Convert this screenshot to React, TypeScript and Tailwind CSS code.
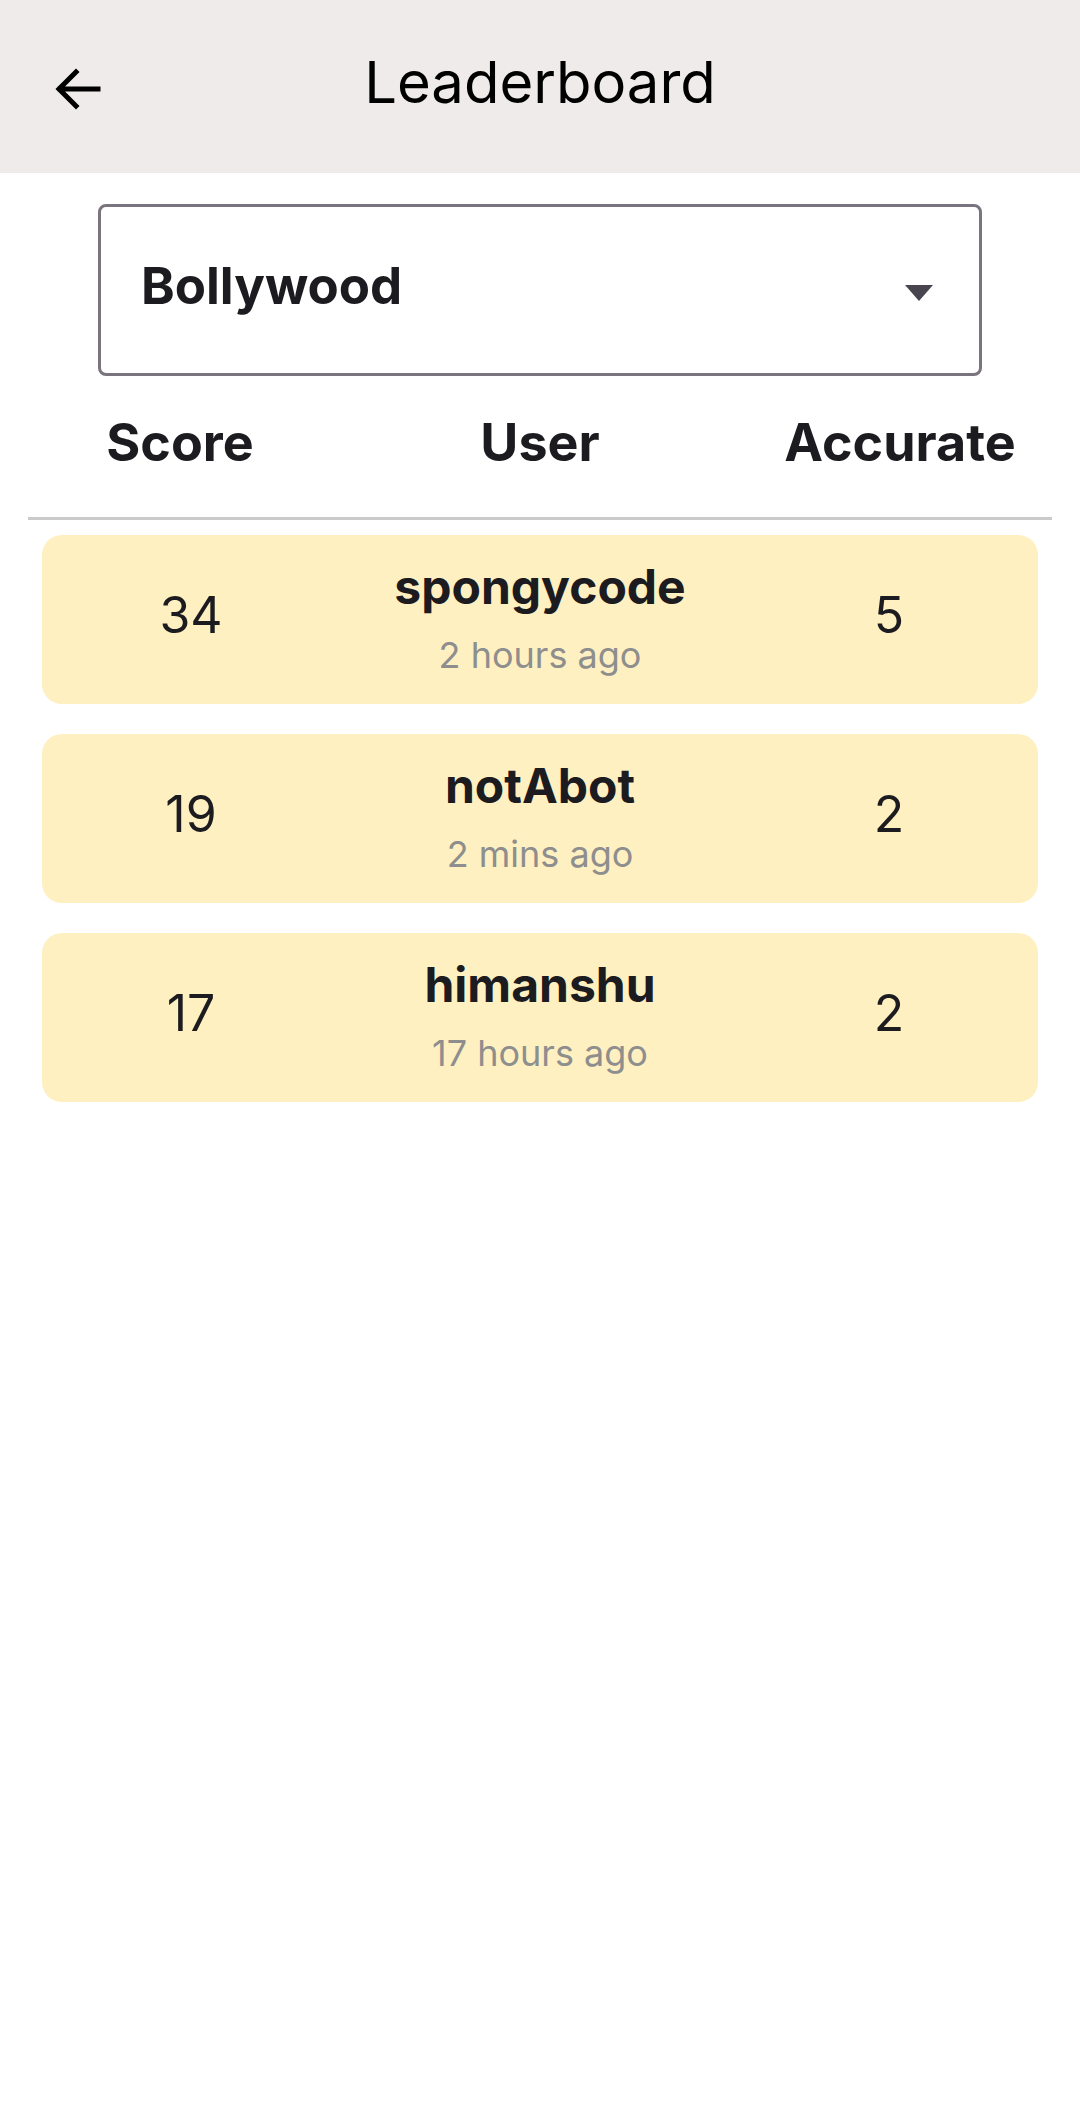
const rows = [
  { score: 34, user: "spongycode", when: "2 hours ago", accurate: 5 },
  { score: 19, user: "notAbot", when: "2 mins ago", accurate: 2 },
  { score: 17, user: "himanshu", when: "17 hours ago", accurate: 2 },
];

function BackArrow() {
  return (
    <svg width="48" height="48" viewBox="0 0 48 48" fill="none">
      <path
        d="M44 24H6M22 7L5 24L22 41"
        stroke="#000"
        strokeWidth="5"
        strokeLinecap="square"
      />
    </svg>
  );
}

export default function App() {
  return (
    <div
      className="min-h-[2123px] bg-white text-[#1c1b1f]"
      style={{ fontFamily: "Inter, 'Noto Sans', sans-serif" }}
    >
      {/* Top bar */}
      <div className="grid h-[173px] grid-cols-[1fr_auto_1fr] items-center bg-[#efebea] px-[54px] pb-[8px]">
        <div className="flex items-center pt-[12px]">
          <BackArrow />
        </div>
        <h1 className="text-[58px] font-normal text-black">Leaderboard</h1>
        <div />
      </div>

      {/* Category select */}
      <div className="mx-[98px] mt-[31px] flex h-[172px] items-center justify-between rounded-[8px] border-[3px] border-[#79747e] pb-[8px] pl-[40px] pr-[46px]">
        <span className="text-[51px] font-bold">Bollywood</span>
        <svg width="28" height="16" viewBox="0 0 28 16" className="mt-[14px]">
          <path d="M0 0H28L14 16Z" fill="#49454f" />
        </svg>
      </div>

      {/* Column headings */}
      <div className="mt-[35px] grid grid-cols-3 text-center text-[52px] font-bold leading-[64px]">
        <span>Score</span>
        <span>User</span>
        <span>Accurate</span>
      </div>
      <div className="mx-[28px] mt-[42px] h-[3px] bg-[#cacaca]" />

      {/* Rows */}
      <div className="mx-[42px] mt-[15px] flex flex-col gap-[30px]">
        {rows.map((r) => (
          <div
            key={r.user}
            className="grid h-[169px] grid-cols-[298px_1fr_298px] items-center rounded-[20px] bg-[#fef0c0] text-center"
          >
            <span className="pb-[8px] text-[50px]">{r.score}</span>
            <div className="flex flex-col items-center pb-[4px]">
              <span className="text-[48px] font-bold leading-[58px]">{r.user}</span>
              <span className="mt-[17px] text-[36px] leading-[44px] text-[#8e8e8e]">{r.when}</span>
            </div>
            <span className="pb-[8px] text-[50px]">{r.accurate}</span>
          </div>
        ))}
      </div>
    </div>
  );
}
